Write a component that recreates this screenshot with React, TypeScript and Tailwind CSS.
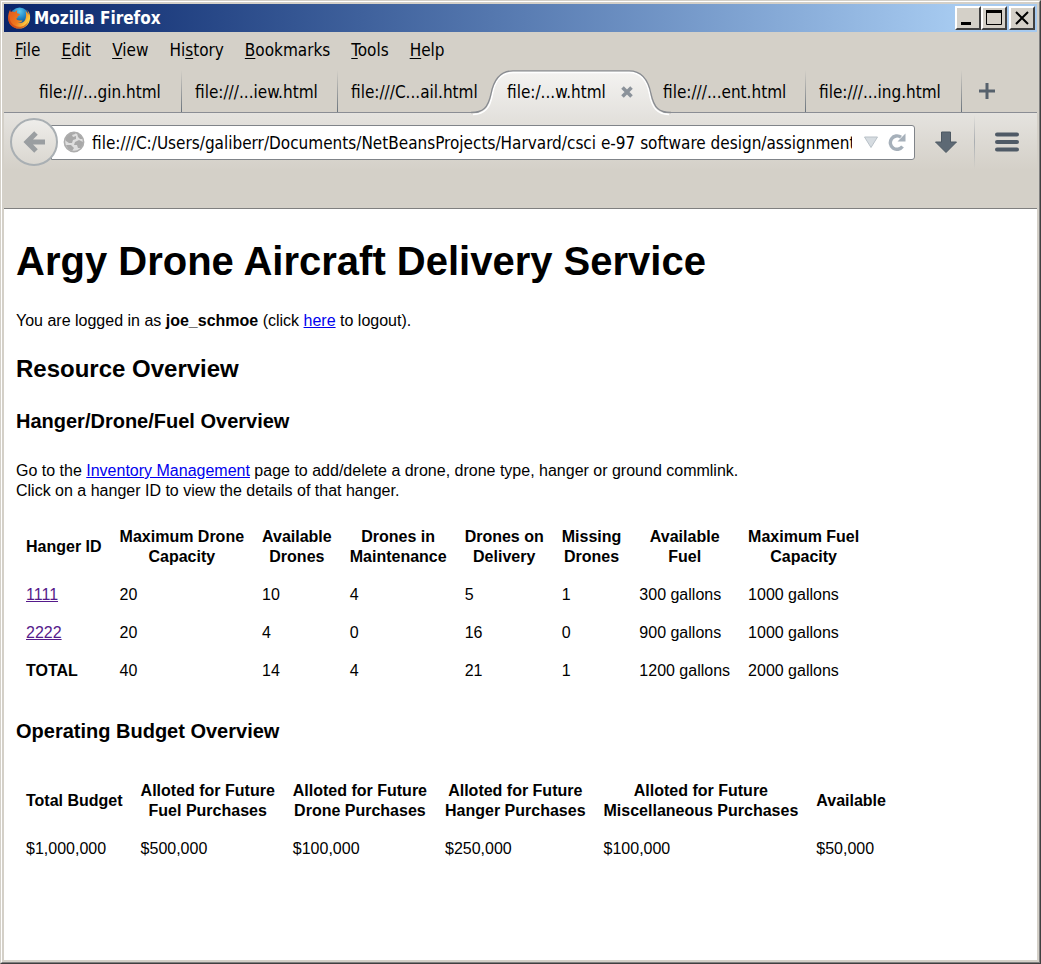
import React from "react";

const menus: [string, string, string][] = [
  ["", "F", "ile"],
  ["", "E", "dit"],
  ["", "V", "iew"],
  ["Hi", "s", "tory"],
  ["", "B", "ookmarks"],
  ["", "T", "ools"],
  ["", "H", "elp"],
];

const tabs = [
  "file:///...gin.html",
  "file:///...iew.html",
  "file:///C...ail.html",
  "file:/...w.html",
  "file:///...ent.html",
  "file:///...ing.html",
];
const activeTab = 3;

const hangerHeads = [
  ["Hanger ID"],
  ["Maximum Drone", "Capacity"],
  ["Available", "Drones"],
  ["Drones in", "Maintenance"],
  ["Drones on", "Delivery"],
  ["Missing", "Drones"],
  ["Available", "Fuel"],
  ["Maximum Fuel", "Capacity"],
];
const hangerRows = [
  ["1111", "20", "10", "4", "5", "1", "300 gallons", "1000 gallons"],
  ["2222", "20", "4", "0", "16", "0", "900 gallons", "1000 gallons"],
  ["TOTAL", "40", "14", "4", "21", "1", "1200 gallons", "2000 gallons"],
];
const budgetHeads = [
  ["Total Budget"],
  ["Alloted for Future", "Fuel Purchases"],
  ["Alloted for Future", "Drone Purchases"],
  ["Alloted for Future", "Hanger Purchases"],
  ["Alloted for Future", "Miscellaneous Purchases"],
  ["Available"],
];
const budgetRow = ["$1,000,000", "$500,000", "$100,000", "$250,000", "$100,000", "$50,000"];

function FirefoxLogo() {
  return (
    <svg viewBox="0 0 24 24" className="size-6 shrink-0" aria-hidden="true">
      <defs>
        <radialGradient id="globe" cx="0.5" cy="0.2" r="0.8">
          <stop offset="0" stopColor="#5cc8ee" />
          <stop offset="0.5" stopColor="#1c7fc0" />
          <stop offset="1" stopColor="#0b2e73" />
        </radialGradient>
        <linearGradient id="fox" x1="0" y1="0" x2="1" y2="0.6">
          <stop offset="0" stopColor="#e0541c" />
          <stop offset="0.6" stopColor="#ef7a1e" />
          <stop offset="1" stopColor="#fde04a" />
        </linearGradient>
      </defs>
      <circle cx="12.6" cy="11" r="9.4" fill="url(#globe)" />
      <path
        d="M3.3 3.2C3.2 4.5 3.4 5.3 3.9 6 5 5.4 6.4 5.5 7.6 6.2 8.6 5 9.5 4.4 10.4 4.2 9.8 5.3 9.8 6.4 10.2 7.3 11.4 7.6 12.6 7.7 13 8.4 12.6 9.6 11 10 10.6 10.6 10.8 11.6 10.4 12.2 9.2 12.6 10 15.4 13.8 14.2 15.6 14.4 14.5 16.2 12.4 16.8 10.9 16.5 13 17.4 16.6 17 18.2 13.8 19.4 11 19.2 7.8 18.6 5.2 20.2 6.2 21.1 7.6 21.4 8.8 21.4 7 20.8 5.2 19.6 3.6 22.4 6 23.4 9 23.1 12.2 22.6 18.4 17.8 22.6 12 22.6 5.6 22.6 1.1 17.8 1.1 12 1.1 9 1.9 5.4 3.3 3.2Z"
        fill="url(#fox)"
      />
      <path d="M2.4 10C2.2 15.5 6 20.4 12 20.8 17 20.8 20.4 17.8 21.5 14 21 19 17 22.6 12 22.6 5.6 22.6 1.1 17.8 1.3 12Z" fill="#c93a16" opacity="0.65" />
    </svg>
  );
}

function WindowButton({ label, children }: { label: string; children: React.ReactNode }) {
  return (
    <button
      type="button"
      aria-label={label}
      className="box-border flex h-6 w-[26px] items-center justify-center border-2 border-t-white border-r-[#404040] border-b-[#404040] border-l-white bg-[#d4d0c8]"
    >
      <svg viewBox="0 0 20 20" className="size-5 shrink-0" aria-hidden="true" fill="none" stroke="#000">
        {children}
      </svg>
    </button>
  );
}

function ActiveTabShape() {
  return (
    <svg viewBox="0 0 200 46" className="pointer-events-none absolute top-0 -left-[23px] h-[46px] w-[200px]" aria-hidden="true">
      <defs>
        <linearGradient id="tabfill" x1="0" y1="0" x2="0" y2="1">
          <stop offset="0" stopColor="#f4f3f1" />
          <stop offset="1" stopColor="#e4e2de" />
        </linearGradient>
      </defs>
      <path d="M0 43.5C12 43.5 17 38 20 24 23 8 30 1 42 1H158C170 1 177 8 180 24 183 38 188 43.5 200 43.5V46H0Z" fill="url(#tabfill)" />
      <path d="M2 44.5C14 44 19 38 21.5 24 24 9 31 2.5 42 2.5H158C169 2.5 176 9 178.5 24 181 38 186 44 198 44.5" fill="none" stroke="#fff" strokeWidth="1.5" />
      <path d="M0 42.5C12 42.5 17 38 20 24 23 8 30 .8 42 .8H158C170 .8 177 8 180 24 183 38 188 42.5 200 42.5" fill="none" stroke="#8a8d92" strokeWidth="1.3" />
    </svg>
  );
}

function Heads({ heads }: { heads: string[][] }) {
  return (
    <tr>
      {heads.map((lines, i) => (
        <th key={i} scope="col" className="p-2 text-center align-middle font-bold whitespace-nowrap">
          {lines.map((line) => (
            <span key={line} className="block">{line}</span>
          ))}
        </th>
      ))}
    </tr>
  );
}

export default function App() {
  return (
    <div className="flex min-h-screen flex-col border border-t-[#d4d0c8] border-r-[#404040] border-b-[#404040] border-l-[#d4d0c8] bg-[#d4d0c8] font-['Liberation_Sans',Arial,sans-serif] text-base leading-5 text-black">
      <div className="flex flex-1 flex-col border border-t-white border-r-[#808080] border-b-[#808080] border-l-white p-[2px]">
        <header className="font-['DejaVu_Sans_Condensed','DejaVu_Sans',sans-serif] text-[17px]">
          <div className="flex h-7 items-center bg-linear-to-r from-[#0a246a] to-[#a6caf0] to-92% pr-[2px] pl-[3px]">
            <FirefoxLogo />
            <span className="ml-[3px] flex-1 font-bold text-white">Mozilla Firefox</span>
            <WindowButton label="Minimize"><path d="M3 15.5H13" strokeWidth="3" /></WindowButton>
            <WindowButton label="Maximize"><path d="M2.5 3V16.5H17.5V3" /><path d="M2 3.5H18" strokeWidth="3" /></WindowButton>
            <span className="w-[2px]" />
            <WindowButton label="Close"><path d="M4 4L16 16M16 4L4 16" strokeWidth="2" /></WindowButton>
          </div>

          <nav className="flex h-[38px] items-center gap-[21px] px-[11px] pb-[2px]" aria-label="Menu bar">
            {menus.map(([a, b, c]) => (
              <button key={a + b + c} type="button">
                {a}<span className="underline underline-offset-2">{b}</span>{c}
              </button>
            ))}
          </nav>

          <div className="flex h-[43px] border-b border-[#8a8d94] pl-[22px]" role="tablist">
            {tabs.map((t, i) =>
              i === activeTab ? (
                <div key={t} className="relative flex w-[156px] items-center pt-[2px]">
                  <ActiveTabShape />
                  <button type="button" role="tab" aria-selected="true" className="relative pl-[13px] whitespace-nowrap">{t}</button>
                  <button type="button" aria-label="Close tab" className="relative ml-[14px]">
                    <svg viewBox="0 0 14 14" className="size-[14px]" aria-hidden="true"><path d="M2.5 2.5L11.5 11.5M11.5 2.5L2.5 11.5" stroke="#8b929a" strokeWidth="3.6" /></svg>
                  </button>
                </div>
              ) : (
                <div key={t} className="flex w-[156px] items-center">
                  <button type="button" role="tab" aria-selected="false" className="flex-1 pt-[2px] pl-[13px] text-left whitespace-nowrap">{t}</button>
                  {i !== activeTab - 1 && <span className="h-full w-px bg-linear-to-b from-transparent to-[#6a737c]" />}
                </div>
              )
            )}
            <button type="button" aria-label="New tab" className="ml-[17px]">
              <svg viewBox="0 0 16 16" className="size-4" aria-hidden="true"><path d="M8 0V16M0 8H16" stroke="#56616c" strokeWidth="3" /></svg>
            </button>
          </div>

          <div className="h-24 border-b border-[#808080] bg-linear-to-b from-[#e5e3df] to-[#d4d0c8] to-60%">
            <div className="flex h-[58px] items-center pl-[6px]">
              <button type="button" aria-label="Back" className="relative z-10 flex size-12 shrink-0 items-center justify-center rounded-full border-2 border-[#a9afb3] bg-linear-to-b from-[#eeedea] to-[#dad7d0]">
                <svg viewBox="0 0 24 24" className="size-6" aria-hidden="true"><path d="M14 3L5 12 14 21M6 12H23" fill="none" stroke="#9a9ea1" strokeWidth="5" strokeLinejoin="miter" /></svg>
              </button>
              <div className="-ml-[7px] flex h-[35px] min-w-0 flex-1 items-center rounded-r-[3px] border border-[#808489] bg-white pl-[11px]">
                <svg viewBox="0 0 22 22" className="size-[22px] shrink-0" aria-hidden="true">
                  <circle cx="11" cy="11" r="10" fill="#dedede" />
                  <path d="M2 8L4 4 8 1.5 12 1 12 3 9 4 10 6 13 5 13 8 10 9 9 12 6 12 3 10ZM14 2L18 4 20 8 17 8 15 6ZM12 11L16 9 20 11 20 14 18 17 15 17 14 14 11 14ZM3 14L8 14 11 17 9 20 5 18Z" fill="#a8a8a8" />
                  <circle cx="11" cy="11" r="9.6" fill="none" stroke="#adadad" strokeWidth="1.6" />
                </svg>
                <input aria-label="Address" className="ml-[7px] h-7 min-w-0 flex-1 bg-transparent pt-[2px] outline-none" defaultValue="file:///C:/Users/galiberr/Documents/NetBeansProjects/Harvard/csci e-97 software design/assignment5/resource_overview.html" />
                <button type="button" aria-label="Show history" className="ml-3">
                  <svg viewBox="0 0 14 12" className="h-3 w-[14px]" aria-hidden="true"><path d="M.5 1H13.5L7 11.5Z" fill="#d6dce1" stroke="#b9c1c8" /></svg>
                </button>
                <button type="button" aria-label="Reload" className="mr-2 ml-[10px]">
                  <svg viewBox="0 0 18 18" className="size-[18px]" aria-hidden="true"><path d="M14.5 13.5A6.700 6.700 0 1 1 13 4.200" fill="none" stroke="#a6b0ba" strokeWidth="3.4" /><path d="M17.500 .5V8.500H9.500Z" fill="#a6b0ba" /></svg>
                </button>
              </div>
              <button type="button" aria-label="Downloads" className="ml-5">
                <svg viewBox="0 0 22 22" className="size-[22px]" aria-hidden="true"><path d="M6.5 1H15.5V11H21.5L11 21.5.5 11H6.5Z" fill="#5d6974" stroke="#4d5862" /></svg>
              </button>
              <span className="ml-[17px] h-[54px] w-px bg-linear-to-b from-transparent via-[#a9adb1] to-transparent" />
              <button type="button" aria-label="Open menu" className="mr-[17px] ml-[19px]">
                <svg viewBox="0 0 26 22" className="h-[22px] w-[26px]" aria-hidden="true"><path d="M3 3.5H23M3 11H23M3 18.5H23" stroke="#4f5a66" strokeWidth="4" strokeLinecap="round" /></svg>
              </button>
            </div>
          </div>
        </header>

        <main className="flex-1 bg-white px-3 pt-7">
          <h1 className="text-[40px] leading-12 font-bold">Argy Drone Aircraft Delivery Service</h1>
          <p className="mt-[26px]">
            You are logged in as <strong>joe_schmoe</strong> (click <a href="#logout" className="text-[#0000ee] underline">here</a> to logout).
          </p>
          <h2 className="mt-6 text-2xl leading-7 font-bold">Resource Overview</h2>
          <h3 className="mt-6 text-xl leading-7 font-bold">Hanger/Drone/Fuel Overview</h3>
          <p className="mt-[26px]">
            Go to the <a href="#inventory" className="text-[#0000ee] underline">Inventory Management</a> page to add/delete a drone, drone type, hanger or ground commlink.
            <br />
            Click on a hanger ID to view the details of that hanger.
          </p>
          <table className="mt-4 border-separate border-spacing-[2px]">
            <thead><Heads heads={hangerHeads} /></thead>
            <tbody>
              {hangerRows.map((row) => (
                <tr key={row[0]}>
                  {row.map((cell, i) => (
                    <td key={i} className="p-2 whitespace-nowrap">
                      {i > 0 ? cell : cell === "TOTAL" ? <strong>{cell}</strong> : <a href={"#hanger-" + cell} className="text-[#551a8b] underline">{cell}</a>}
                    </td>
                  ))}
                </tr>
              ))}
            </tbody>
          </table>
          <h3 className="mt-[26px] text-xl leading-7 font-bold">Operating Budget Overview</h3>
          <table className="mt-[26px] border-separate border-spacing-[2px]">
            <thead><Heads heads={budgetHeads} /></thead>
            <tbody>
              <tr>
                {budgetRow.map((cell, i) => (
                  <td key={i} className="p-2">{cell}</td>
                ))}
              </tr>
            </tbody>
          </table>
        </main>
      </div>
    </div>
  );
}
